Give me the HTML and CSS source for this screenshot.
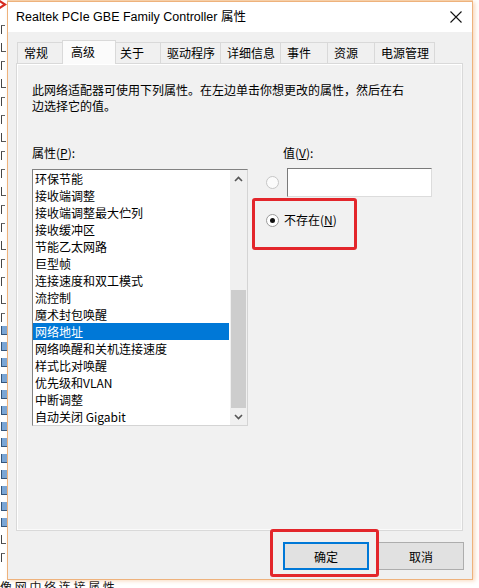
FILE: index.html
```html
<!DOCTYPE html>
<html lang="zh-CN">
<head>
<meta charset="utf-8">
<title>Realtek PCIe GBE Family Controller 属性</title>
<link rel="stylesheet" href="styles.css">
</head>
<body>
<div class="desktop">
  <div class="strip">
    <svg class="redx" width="7" height="9" viewBox="0 0 7 9"><path d="M-2 0 L5 4.5 L-2 9" fill="none" stroke="#d62b1f" stroke-width="2.2"/></svg>
    <div class="strip-marks">
      <i></i><i class="s"></i><i></i><i class="s"></i><i></i><i></i><i class="s"></i><i></i><i></i><i class="s"></i><i></i><i></i><i class="s"></i><i></i><i></i><i class="s"></i><i></i>
    </div>
    <div class="strip-icons">
      <i></i><i></i><i></i><i></i><i></i><i></i><i></i><i></i><i></i><i></i><i></i><i></i><i></i>
    </div>
    <div class="strip-marks tail"><i class="s"></i><i></i></div>
  </div>
  <div class="dialog">
    <div class="titlebar">
      <span class="title">Realtek PCIe GBE Family Controller 属性</span>
      <svg class="close" width="12" height="12" viewBox="0 0 12 12"><path d="M0.5 0.5 L11.5 11.5 M11.5 0.5 L0.5 11.5" stroke="#111" stroke-width="1.1" fill="none"/></svg>
    </div>
    <div class="content">
      <div class="tabs">
        <div class="tab">常规</div>
        <div class="tab active">高级</div>
        <div class="tab">关于</div>
        <div class="tab">驱动程序</div>
        <div class="tab">详细信息</div>
        <div class="tab">事件</div>
        <div class="tab">资源</div>
        <div class="tab">电源管理</div>
      </div>
      <div class="panel">
        <p class="desc">此网络适配器可使用下列属性。在左边单击你想更改的属性，然后在右边选择它的值。</p>
        <div class="grid">
          <div class="label">属性(<u>P</u>):</div>
          <div class="label vlabel">值(<u>V</u>):</div>
          <div class="listbox">
            <div class="items">
              <div class="item">环保节能</div>
              <div class="item">接收端调整</div>
              <div class="item">接收端调整最大伫列</div>
              <div class="item">接收缓冲区</div>
              <div class="item">节能乙太网路</div>
              <div class="item">巨型帧</div>
              <div class="item">连接速度和双工模式</div>
              <div class="item">流控制</div>
              <div class="item">魔术封包唤醒</div>
              <div class="item selected">网络地址</div>
              <div class="item">网络唤醒和关机连接速度</div>
              <div class="item">样式比对唤醒</div>
              <div class="item">优先级和VLAN</div>
              <div class="item">中断调整</div>
              <div class="item">自动关闭 Gigabit</div>
            </div>
            <div class="scrollbar">
              <div class="sb-btn"><svg width="9" height="6" viewBox="0 0 9 6"><path d="M1 5 L4.5 1.5 L8 5" fill="none" stroke="#555" stroke-width="1.6"/></svg></div>
              <div class="sb-track"><div class="sb-thumb"></div></div>
              <div class="sb-btn"><svg width="9" height="6" viewBox="0 0 9 6"><path d="M1 1 L4.5 4.5 L8 1" fill="none" stroke="#555" stroke-width="1.6"/></svg></div>
            </div>
          </div>
          <div class="values">
            <div class="vrow">
              <span class="radio"></span>
              <div class="edit"></div>
            </div>
            <div class="vrow second">
              <span class="radio checked"></span>
              <span>不存在(<u>N</u>)</span>
            </div>
          </div>
        </div>
      </div>
      <div class="buttons">
        <button class="btn default">确定</button>
        <button class="btn">取消</button>
      </div>
    </div>
    <div class="mark mark-radio"></div>
    <div class="mark mark-ok"></div>
  </div>
</div>
<div class="bottomline">像 网 中 络 连 接 属 性</div>
</body>
</html>
```
FILE: styles.css
```css
html, body {
  margin: 0;
  padding: 0;
}
body {
  width: 479px;
  height: 588px;
  overflow: hidden;
  background: #ffffff;
  font-family: "Noto Sans CJK SC", "Noto Sans", sans-serif;
  font-size: 12px;
  color: #000;
}
.desktop {
  display: flex;
  height: 580px;
}
.strip {
  width: 7px;
  flex: none;
  overflow: hidden;
  display: flex;
  flex-direction: column;
}
.redx {
  display: block;
  flex: none;
}
.strip-marks {
  display: flex;
  flex-direction: column;
  gap: 9px;
  padding-top: 16px;
}
.strip-marks i {
  display: block;
  width: 3px;
  height: 8px;
  margin-left: 1px;
  border-left: 1px solid #444;
  border-top: 1px solid #666;
}
.strip-marks i.s {
  width: 4px;
  border-top: none;
  border-bottom: 1px solid #555;
}
.strip-marks.tail {
  padding-top: 8px;
}
.strip-icons {
  display: flex;
  flex-direction: column;
  gap: 7px;
  padding-top: 4px;
}
.strip-icons i {
  display: block;
  width: 5px;
  height: 8px;
  margin-left: 1px;
  background: #7aa6d6;
  border-left: 1px solid #35557a;
  border-bottom: 1px solid #35557a;
}
.dialog {
  position: relative;
  width: 466px;
  height: 579px;
  margin-top: 1px;
  box-sizing: border-box;
  border: 1px solid #eeb27c;
  background: #f0f0f0;
  display: flex;
  flex-direction: column;
  box-shadow: 0 -1px 0 #f6cfa8, 2px 1px 4px rgba(240, 170, 110, 0.45);
}
.titlebar {
  height: 30px;
  flex: none;
  background: #ffffff;
  display: flex;
  align-items: center;
  padding-left: 8px;
}
.title {
  font-family: "Liberation Sans", "Noto Sans CJK SC", sans-serif;
  font-size: 12.5px;
  line-height: 16px;
  margin-top: -1px;
}
.close {
  margin-left: auto;
  margin-right: 10px;
  margin-top: -1px;
}
.content {
  padding: 8px 8px 0 8px;
  display: flex;
  flex-direction: column;
}
.tabs {
  height: 23px;
  display: flex;
  align-items: flex-end;
  padding-left: 1px;
}
.tab {
  height: 21px;
  box-sizing: border-box;
  min-width: 48px;
  padding: 0 5px 0 6px;
  border: 1px solid #d9d9d9;
  border-bottom: none;
  background: #f0f0f0;
  line-height: 20px;
  margin-right: -1px;
  white-space: nowrap;
}
.tab.active {
  position: relative;
  z-index: 1;
  height: 24px;
  min-width: 54px;
  margin: 0 -3px -1px -2px;
  padding-left: 8px;
  line-height: 21px;
  background: #fbfbfb;
}
.panel {
  width: 447px;
  height: 468px;
  box-sizing: border-box;
  border: 1px solid #d9d9d9;
  background: #f1f1f1;
  box-shadow: inset 1px 1px 0 #ffffff, inset -1px -1px 0 #fafafa;
  padding: 18px 0 0 15px;
}
.desc {
  margin: 0;
  width: 380px;
  line-height: 16px;
}
.grid {
  display: grid;
  grid-template-columns: 216px 170px;
  column-gap: 18px;
  row-gap: 8px;
  margin-top: 31px;
}
.label {
  line-height: 16px;
}
.vlabel {
  padding-left: 17px;
}
.listbox {
  width: 216px;
  height: 257px;
  box-sizing: border-box;
  border: 1px solid #828282;
  border-right-color: #d4d4d4;
  border-bottom-color: #d4d4d4;
  background: #ffffff;
  display: flex;
  overflow: hidden;
}
.items {
  width: 197px;
  flex: none;
}
.item {
  height: 17px;
  line-height: 17px;
  padding-left: 2px;
  white-space: nowrap;
}
.item.selected {
  background: #0078d7;
  color: #ffffff;
  margin-right: 1px;
}
.scrollbar {
  width: 17px;
  flex: none;
  background: #f0f0f0;
  display: flex;
  flex-direction: column;
}
.sb-btn {
  height: 17px;
  display: flex;
  align-items: center;
  justify-content: center;
}
.sb-track {
  flex: 1;
  display: flex;
  flex-direction: column;
  justify-content: flex-end;
}
.sb-thumb {
  height: 118px;
  margin: 0 1px;
  background: #cdcdcd;
}
.values {
  margin-top: -1px;
}
.vrow {
  display: flex;
  align-items: center;
}
.vrow.second {
  margin-top: 15px;
  height: 16px;
  line-height: 16px;
  gap: 5px;
}
.radio {
  width: 13px;
  height: 13px;
  box-sizing: border-box;
  border: 1px solid #c6c6c6;
  border-radius: 50%;
  background: #fbfbfb;
  flex: none;
  position: relative;
}
.vrow .radio {
  margin-right: 8px;
}
.vrow.second .radio {
  margin-right: 0;
}
.radio.checked {
  border-color: #9a9a9a;
  background: #ffffff;
}
.radio.checked::after {
  content: "";
  position: absolute;
  left: 3px;
  top: 3px;
  width: 5px;
  height: 5px;
  border-radius: 50%;
  background: #111;
}
.edit {
  width: 145px;
  height: 29px;
  box-sizing: border-box;
  background: #ffffff;
  border: 1px solid #7a7a7a;
  border-right-color: #dcdcdc;
  border-bottom-color: #dcdcdc;
}
.buttons {
  display: flex;
  justify-content: flex-end;
  gap: 9px;
  margin-top: 11px;
}
.btn {
  width: 86px;
  height: 28px;
  box-sizing: border-box;
  background: #e1e1e1;
  border: 1px solid #adadad;
  font-family: "Noto Sans CJK SC", "Noto Sans", sans-serif;
  font-size: 12px;
  color: #000;
  padding: 0;
  margin: 0;
}
.btn.default {
  border: 2px solid #0078d7;
}
.mark {
  position: absolute;
  box-sizing: border-box;
  border: 3px solid #e3262b;
  border-radius: 3px;
  z-index: 2;
}
.mark-radio {
  left: 244px;
  top: 196px;
  width: 105px;
  height: 52px;
}
.mark-ok {
  left: 262px;
  top: 527px;
  width: 109px;
  height: 48px;
}
.bottomline {
  height: 8px;
  overflow: hidden;
  line-height: 14px;
  font-size: 12px;
  color: #111;
  white-space: nowrap;
}
```
